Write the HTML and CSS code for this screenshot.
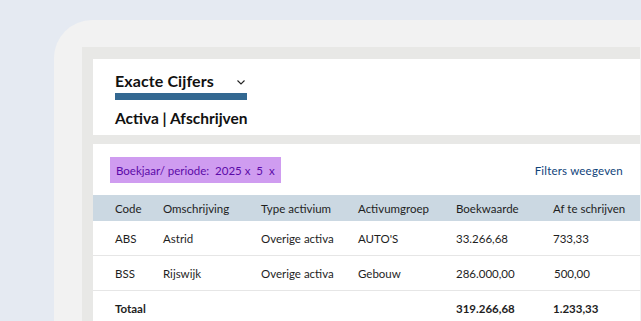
FILE: index.html
```html
<!DOCTYPE html>
<html lang="nl">
<head>
<meta charset="utf-8">
<link rel="stylesheet" href="styles.css">
</head>
<body>
<div class="panel">
  <div class="frame">
    <section class="card head-card">
      <div class="title-row">
        <span class="title">Exacte Cijfers</span>
        <svg class="chev" width="8" height="5" viewBox="0 0 8 5"><path d="M0.5 0.5 L4 4 L7.5 0.5" fill="none" stroke="#222" stroke-width="1.1"/></svg>
      </div>
      <div class="bar"></div>
      <h1 class="subtitle">Activa | Afschrijven</h1>
    </section>
    <section class="card table-card">
      <div class="filter-row">
        <span class="chip">Boekjaar/ periode:&nbsp; 2025 x &nbsp;5 &nbsp;x</span>
        <a class="filters">Filters weegeven</a>
      </div>
      <div class="row thead">
        <span>Code</span><span>Omschrijving</span><span>Type activium</span><span>Activumgroep</span><span>Boekwaarde</span><span>Af te schrijven</span>
      </div>
      <div class="row">
        <span>ABS</span><span>Astrid</span><span>Overige activa</span><span>AUTO'S</span><span>33.266,68</span><span>733,33</span>
      </div>
      <div class="row">
        <span>BSS</span><span>Rijswijk</span><span>Overige activa</span><span>Gebouw</span><span>286.000,00</span><span class="nudge">500,00</span>
      </div>
      <div class="row total">
        <span>Totaal</span><span></span><span></span><span></span><span>319.266,68</span><span>1.233,33</span>
      </div>
    </section>
  </div>
</div>
</body>
</html>
```
FILE: styles.css
```css
html, body {
  margin: 0;
  padding: 0;
}
body {
  background: #e5eaf2;
  width: 641px;
  height: 321px;
  overflow: hidden;
  font-family: Lato, "Open Sans", sans-serif;
  color: #1e1e1e;
}
.panel {
  margin: 20px 0 0 54px;
  height: 301px;
  background: #f2f2f2;
  border-top-left-radius: 38px;
  padding: 27px 1px 0 28px;
  box-sizing: border-box;
}
.frame {
  background: #e8e8e6;
  padding: 12px 0 0 11px;
  height: 274px;
  box-sizing: border-box;
  display: flex;
  flex-direction: column;
  gap: 9px;
  overflow: hidden;
}
.card {
  background: #fff;
  flex-shrink: 0;
}
.head-card {
  height: 76px;
  padding: 13px 0 0 22px;
  box-sizing: border-box;
}
.title-row {
  display: flex;
  align-items: center;
  height: 17px;
}
.title {
  font-size: 16px;
  font-weight: 700;
  color: #111;
  letter-spacing: 0.1px;
}
.chev {
  margin-left: 23px;
  margin-top: 3px;
}
.bar {
  margin-top: 4px;
  width: 132px;
  height: 7px;
  background: #336891;
}
.subtitle {
  margin: 9px 0 0;
  font-size: 15.5px;
  font-weight: 700;
  color: #111;
  line-height: 18px;
}
.table-card {
  flex: 1 0 auto;
}
.filter-row {
  display: flex;
  align-items: center;
  justify-content: space-between;
  padding: 13px 17px 12px 17px;
}
.chip {
  background: #cf9cf0;
  color: #5c0aa8;
  font-size: 11.5px;
  width: 171px;
  height: 26px;
  box-sizing: border-box;
  padding-left: 6px;
  display: flex;
  align-items: center;
  white-space: pre;
}
.filters {
  color: #0f437a;
  font-size: 11.5px;
  font-weight: 400;
  letter-spacing: 0.2px;
}
.row {
  display: grid;
  grid-template-columns: 48px 98px 97px 98px 97px 1fr;
  padding-left: 22px;
  height: 34px;
  align-items: center;
  font-size: 11.5px;
  color: #1e1e1e;
  border-bottom: 1px solid #e6e6e6;
}
.thead {
  background: #cbd8e2;
  height: 26px;
  border-bottom: 0;
}
.total {
  font-weight: 700;
}
.nudge {
  padding-left: 1px;
}
```
